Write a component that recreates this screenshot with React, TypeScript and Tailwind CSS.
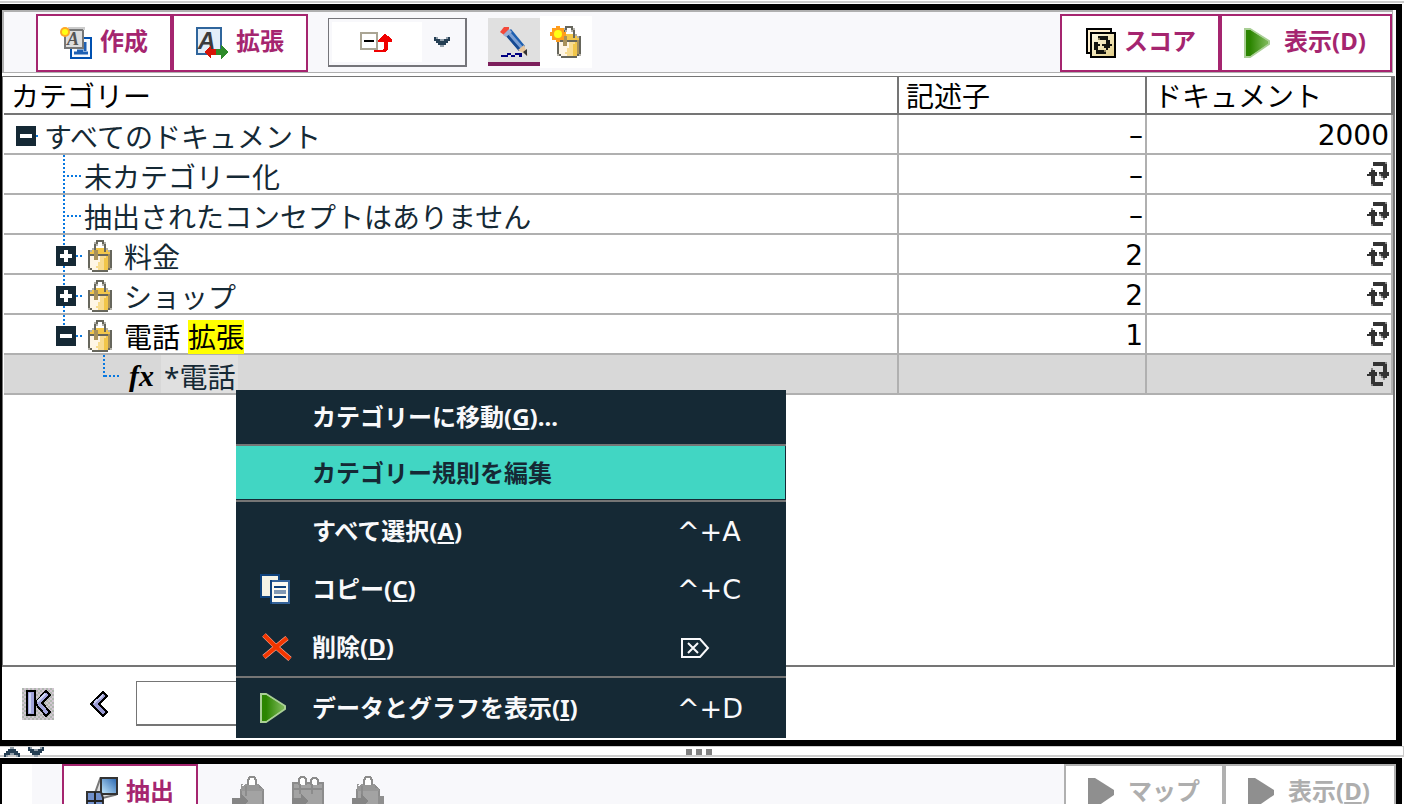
import React from "react";

type IconProps = { className?: string };

function Pixels({ map, colors }: { map: string[]; colors: Record<string, string> }) {
  return (
    <g shapeRendering="crispEdges">
      {map.flatMap((line, y) =>
        line.split("").map((cell, x) =>
          colors[cell] ? <rect key={`${x}-${y}`} x={x * 2} y={y * 2} width="2" height="2" fill={colors[cell]} /> : null,
        ),
      )}
    </g>
  );
}

const refreshMap = [
  "...######s.",
  "...#######.",
  "........##.",
  "..s.....##.",
  "..##....##.",
  ".####.#####",
  "#####.s####",
  "..##...s##.",
  "..##....s..",
  "..##.......",
  "..######...",
  "..s#####...",
];

function RefreshIcon() {
  return (
    <svg width="22" height="24" viewBox="0 0 22 24" role="img" aria-label="更新">
      <Pixels map={refreshMap} colors={{ "#": "#333", s: "#8a8a8a" }} />
    </svg>
  );
}

const bucketMap = [
  "....gggg....",
  "...sg..gs...",
  "...gs..sg...",
  "...g....g...",
  "..sgyyyygs..",
  "gsyddyyygysg",
  "gyyddyyyyyyg",
  "gggddgggggdg",
  "gwwddwcccydg",
  "gwwddwccyydg",
  "gwwwwwccyydg",
  "gwwwwcccyydg",
  "gwwwwcccyydg",
  "gwwwccccyydg",
  "sgwwwcccyygs",
  "..gggggggg..",
];
const bucketColors = { g: "#66665c", s: "#b5b3aa", d: "#a8915a", y: "#f1c64a", c: "#f8dc92", w: "#fff6e6" };

function BucketIcon() {
  return (
    <svg width="24" height="32" viewBox="0 0 24 32" className="block shrink-0" aria-hidden="true">
      <Pixels map={bucketMap} colors={bucketColors} />
    </svg>
  );
}

function NewBucketIcon() {
  return (
    <svg width="32" height="32" viewBox="0 0 32 32" aria-hidden="true">
      <g transform="translate(7 0)">
        <Pixels map={bucketMap} colors={bucketColors} />
      </g>
      <path d="M6 0h4v2h4v4h2v4h-2v4h-4v2H6v-2H2v-4H0V6h2V2h4z" fill="#ff9d1c" shapeRendering="crispEdges" />
      <circle cx="8" cy="8" r="4" fill="#ffff14" />
    </svg>
  );
}

function CreateIcon() {
  return (
    <svg width="32" height="32" viewBox="0 0 32 32" aria-hidden="true">
      <rect x="11" y="11" width="20" height="20" fill="#f4f9ff" stroke="#0050b0" strokeWidth="2" />
      <path d="M14 26h14M25 15v9M17 24h6" stroke="#1d60b4" strokeWidth="3" />
      <rect x="5" y="3" width="18" height="18" fill="#dedede" stroke="#777" strokeWidth="2" />
      <path d="M8 1h16v2" fill="none" stroke="#ccc" strokeWidth="2" />
      <text x="7" y="18" fontSize="18" fontWeight="700" fontStyle="italic" fontFamily="Liberation Serif, serif" fill="#555">A</text>
      <circle cx="5" cy="5" r="5" fill="#ffa826" />
      <circle cx="5" cy="5" r="3" fill="#ffff14" />
    </svg>
  );
}

function ExtendIcon() {
  return (
    <svg width="32" height="32" viewBox="0 0 32 32" aria-hidden="true">
      <rect x="1" y="1" width="24" height="26" fill="#e4eef8" stroke="#2f659c" strokeWidth="2" />
      <text x="2" y="22" fontSize="24" fontWeight="700" fontStyle="italic" fontFamily="Liberation Sans, sans-serif" fill="#3c3c3c">A</text>
      <g shapeRendering="crispEdges">
        <path d="M8 25l7-7v4h6v6h-6v4z" fill="#d61407" />
        <path d="M32 25l-7-7v4h-5v6h5v4z" fill="#2e8b2a" />
      </g>
    </svg>
  );
}

function CollapseIcon() {
  return (
    <svg width="32" height="20" viewBox="0 0 32 20" aria-hidden="true" shapeRendering="crispEdges">
      <rect x="1" y="1" width="16" height="16" fill="#fff" stroke="#aaa594" strokeWidth="2" />
      <path d="M4 8h10v2H4z" fill="#000" />
      <path d="M14 18h8l2-2V10h-6V8l2-2 2-2 3-2 3 2 2 2 2 2v2h-4v7l-3 3H14z" fill="#f00000" />
    </svg>
  );
}

function Chevron({ className }: IconProps) {
  return (
    <svg width="16" height="10" viewBox="0 0 16 10" className={className} aria-hidden="true">
      <Pixels
        map={["#s....s#", "###ss###", ".######.", "..####..", "...ss..."]}
        colors={{ "#": "#253f54", s: "#93a0ab" }}
      />
    </svg>
  );
}

function PencilIcon() {
  return (
    <svg width="32" height="32" viewBox="0 0 32 32" aria-hidden="true">
      <path d="M7 8l6-5 14 17-6 5z" fill="#1d5fb0" />
      <path d="M9 9l13 15" stroke="#174a92" strokeWidth="3" />
      <path d="M11 7l13 15" stroke="#7c9fd2" strokeWidth="3" />
      <path d="M2 6l4-5h5v4L6 9z" fill="#f4493a" />
      <path d="M5 9l6-6 3 3-6 5z" fill="#9bb0d4" />
      <path d="M20 24l6-5 4 11z" fill="#e8c79d" />
      <path d="M25 26l4-3v7z" fill="#333" />
      <path d="M3 30h7M9 28h4M13 30h4M17 28h7M21 30h3" stroke="#000080" strokeWidth="2" fill="none" />
    </svg>
  );
}

function ScoreIcon() {
  return (
    <svg width="30" height="30" viewBox="0 0 30 30" aria-hidden="true">
      <defs>
        <linearGradient id="cream" x2="1" y2="1">
          <stop offset="0" stopColor="#fffbe8" />
          <stop offset="1" stopColor="#e0cc84" />
        </linearGradient>
      </defs>
      <rect x="1" y="1" width="24" height="24" fill="#fff0d0" stroke="#000" strokeWidth="2" />
      <rect x="5" y="5" width="24" height="24" fill="url(#cream)" stroke="#000" strokeWidth="2" />
      <g transform="translate(8 8)">
        <Pixels
          map={["..#####..", "..s####..", "......##.", "##....##.", "###.#####", "##...###.", "##....#..", ".####s...", ".#####..."]}
          colors={{ "#": "#151510", s: "#8a805c" }}
        />
      </g>
    </svg>
  );
}

function PlayIcon() {
  return (
    <svg width="26" height="30" viewBox="0 0 26 30" aria-hidden="true">
      <defs>
        <linearGradient id="leaf">
          <stop offset="0.2" stopColor="#2b8500" />
          <stop offset="1" stopColor="#7cb857" />
        </linearGradient>
      </defs>
      <path d="M1 1h5l19 12v3L6 29H1z" fill="url(#leaf)" stroke="#a9cf95" strokeWidth="2" />
      <path d="M2 2h4l17 11v3L6 28H2z" fill="url(#leaf)" />
    </svg>
  );
}

function GreyPlayIcon() {
  return (
    <svg width="26" height="30" viewBox="0 0 26 30" aria-hidden="true">
      <path d="M0 0h7l19 12v5L7 30H0z" fill="#8f8f8f" />
    </svg>
  );
}

function CopyIcon() {
  return (
    <svg width="30" height="30" viewBox="0 0 30 30" aria-hidden="true">
      <rect x="1" y="1" width="18" height="22" fill="#f5f3e6" stroke="#0f427c" strokeWidth="2" />
      <rect x="11" y="7" width="18" height="22" fill="#fbfaf2" stroke="#34639a" strokeWidth="2" />
      <path d="M11 6v24" stroke="#0f427c" strokeWidth="2" />
      <path d="M14 13h12M14 23h12" stroke="#0f427c" strokeWidth="2" />
      <path d="M14 18h12" stroke="#8199b4" strokeWidth="4" />
    </svg>
  );
}

function DeleteIcon() {
  return (
    <svg width="32" height="28" viewBox="0 0 32 28" aria-hidden="true">
      <path d="M4 2l11 11L30 26M27 5L16 14 4 24" fill="none" stroke="#ffad99" strokeWidth="5" />
      <path d="M4 2l11 11L30 26M27 5L16 14 4 24" fill="none" stroke="#f33600" strokeWidth="4" />
    </svg>
  );
}

function ForwardDeleteIcon() {
  return (
    <svg width="30" height="22" viewBox="0 0 30 22" className="ml-[3px]" role="img" aria-label="Delete">
      <path d="M2 2h18l8 9-8 9H2zM8 6l10 10M18 6L8 16" fill="none" stroke="#f9f9fb" strokeWidth="2" />
    </svg>
  );
}

function FirstIcon() {
  return (
    <svg width="32" height="32" viewBox="0 0 32 32" aria-hidden="true" shapeRendering="crispEdges">
      <defs>
        <pattern id="dither" width="4" height="4" patternUnits="userSpaceOnUse">
          <path d="M0 0h4v4H0z" fill="#d2c6d2" />
          <path d="M0 0h2v2H0zM2 2h2v2H2z" fill="#b0b8b0" />
        </pattern>
      </defs>
      <path d="M0 0h32v32H0z" fill="url(#dither)" />
      <path d="M13 15L24 3l4 4-8 8 8 9-4 4z" fill="#a3a5dc" stroke="#000" strokeWidth="2" />
      <path d="M5 3h8v24H5z" fill="#a3a5dc" stroke="#000" strokeWidth="2" />
      <path d="M8 5v20M15 14l8-8" stroke="#cdd4f2" strokeWidth="2" />
    </svg>
  );
}

function PreviousIcon() {
  return (
    <svg width="18" height="26" viewBox="0 0 18 26" aria-hidden="true" shapeRendering="crispEdges">
      <path d="M1 13L13 1l4 4-8 8 8 8-4 4z" fill="#9999d2" stroke="#000" strokeWidth="2" />
      <path d="M4 12l9-8" stroke="#c4c8ee" strokeWidth="2" />
    </svg>
  );
}

function ExtractIcon() {
  return (
    <svg width="32" height="32" viewBox="0 0 32 32" aria-hidden="true">
      <defs>
        <linearGradient id="screen" x1="1" y1="0" x2="0" y2="1">
          <stop offset="0" stopColor="#2462ad" />
          <stop offset="1" stopColor="#c8ecff" />
        </linearGradient>
      </defs>
      <path d="M14 2L9 16l8 5 12-3z" fill="#ddd" stroke="#777" strokeWidth="2" />
      <rect x="15" y="1" width="16" height="16" fill="url(#screen)" stroke="#333" strokeWidth="2" />
      <path d="M1 15h14l2 6v10H1z" fill="#7190cc" stroke="#333" strokeWidth="2" />
      <path d="M9 15v16M1 24h16" stroke="#222" strokeWidth="2" />
    </svg>
  );
}

function GreyBucketIcon({ kind }: { kind: "single" | "pair" | "link" }) {
  const shift = kind === "link" ? "translate(-4 0)" : undefined;
  return (
    <svg width="32" height="32" viewBox="0 0 32 32" aria-hidden="true" shapeRendering="crispEdges">
      {kind === "pair" ? (
        <>
          <path d="M1 7h30v25H1z" fill="#a3a3a3" stroke="#8c8c8c" strokeWidth="2" />
          <path d="M7 9V3l2-2h3l2 2v6M19 9V4l2-2h3l2 2v5" fill="#fff" stroke="#8c8c8c" strokeWidth="2" />
          <path d="M8 8v10M20 8v10M2 13h28" fill="none" stroke="#8c8c8c" strokeWidth="2" />
        </>
      ) : (
        <g transform={shift}>
          <path d="M9 14l4-4h14l4 4v18H9z" fill="#a3a3a3" stroke="#8c8c8c" strokeWidth="2" />
          <path d="M10 10h3V8h14v4h4v3H9V8h2z" fill="#979797" />
          <path d="M16 9V4l2-3h4l2 3v5" fill="#fff" stroke="#8c8c8c" strokeWidth="2" />
          <path d="M14 10v10" stroke="#8c8c8c" strokeWidth="2" />
        </g>
      )}
      <path d="M0 22h9v-4l8 7-8 7v-4H0z" fill="#858585" />
      {kind === "link" && <path d="M26 20h6v12h-6z" fill="#8f8f8f" />}
    </svg>
  );
}

function ToolButton({ icon, children, className = "" }: { icon: React.ReactNode; children: React.ReactNode; className?: string }) {
  return (
    <button
      type="button"
      className={`flex h-[58px] shrink-0 items-center border-2 border-[#a5256f] bg-white text-2xl font-bold whitespace-nowrap text-[#a5256f] ${className}`}
    >
      {icon}
      <span className="pb-1 leading-9">{children}</span>
    </button>
  );
}

const dotsX = "h-[2px] shrink-0 bg-[repeating-linear-gradient(90deg,#0878e0_0_2px,transparent_2px_4px)]";
const dotsY = "w-[2px] bg-[repeating-linear-gradient(180deg,#0878e0_0_2px,transparent_2px_4px)]";
const label = "pt-[5px] whitespace-nowrap";

function Toggle({ open, lines, last, name }: { open: boolean; lines: boolean; last?: boolean; name: string }) {
  return (
    <span className="flex h-full w-5 shrink-0 flex-col">
      <span className={`ml-[7px] h-[11px] shrink-0 ${lines ? dotsY : ""}`} />
      <button type="button" aria-label={name} aria-expanded={open} className="block size-5 shrink-0 bg-[#152935]">
        <svg width="20" height="20" viewBox="0 0 20 20" aria-hidden="true">
          <path d={open ? "M4 8h12v4H4z" : "M4 8h4V4h4v4h4v4h-4v4H8v-4H4z"} fill="#fff" />
        </svg>
      </button>
      <span className={`ml-[7px] flex-1 ${lines && !last ? dotsY : ""}`} />
    </span>
  );
}

function Leaf({ children }: { children: React.ReactNode }) {
  return (
    <div className="flex h-[38px] items-center pl-[59px]">
      <span className={`h-full shrink-0 ${dotsY}`} />
      <span className={`mt-1 mr-[3px] ml-[2px] w-[14px] ${dotsX}`} />
      <span className={label}>{children}</span>
    </div>
  );
}

function Branch({ open = false, last = false, name, children }: { open?: boolean; last?: boolean; name: string; children: React.ReactNode }) {
  return (
    <div className="flex h-[38px] items-center pl-[52px]">
      <Toggle open={open} lines last={last} name={name} />
      <span className={`mt-1 mr-[6px] w-[6px] ${dotsX}`} />
      <span className="pt-1"><BucketIcon /></span>
      <span className={`pl-3 ${label}`}>{children}</span>
    </div>
  );
}

type Row = { tree: React.ReactNode; count: string; docs: string | null; selected?: boolean };

const rows: Row[] = [
  {
    tree: (
      <div className="flex h-[38px] items-center pl-3">
        <Toggle open lines={false} name="すべてのドキュメント" />
        <span className={`mt-1 mr-1 w-1 ${dotsX}`} />
        <span className={label}>すべてのドキュメント</span>
      </div>
    ),
    count: "–",
    docs: "2000",
  },
  { tree: <Leaf>未カテゴリー化</Leaf>, count: "–", docs: null },
  { tree: <Leaf>抽出されたコンセプトはありません</Leaf>, count: "–", docs: null },
  { tree: <Branch name="料金">料金</Branch>, count: "2", docs: null },
  { tree: <Branch name="ショップ">ショップ</Branch>, count: "2", docs: null },
  {
    tree: (
      <Branch open last name="電話">
        <span className="flex gap-2 text-black">
          電話 <mark className="bg-[#ffff00] text-black">拡張</mark>
        </span>
      </Branch>
    ),
    count: "1",
    docs: null,
  },
  {
    tree: (
      <div className="flex h-[38px] items-center pl-[99px]">
        <span className={`mb-auto h-[22px] shrink-0 ${dotsY}`} />
        <span className={`mt-1 mr-1 w-4 ${dotsX}`} />
        <i className="w-9 pt-1 pl-1 font-['Liberation_Serif',serif] text-[30px] font-bold text-black">fx</i>
        <span className={`h-[38px] bg-[#e0e0e0] px-[3px] ${label}`}>*電話</span>
      </div>
    ),
    count: "",
    docs: null,
    selected: true,
  },
];

function MenuItem({ icon, shortcut, active, className, children }: { icon?: React.ReactNode; shortcut?: React.ReactNode; active?: boolean; className: string; children: React.ReactNode }) {
  return (
    <button
      type="button"
      role="menuitem"
      className={`flex w-full items-center pl-6 text-left text-2xl font-bold whitespace-nowrap ${active ? "bg-[#41d6c3] text-[#152935]" : "text-[#f9f9fb]"} ${className}`}
    >
      <span className="w-[52px] shrink-0">{icon}</span>
      <span className="flex-1 leading-9">{children}</span>
      <span className="w-[109px] shrink-0 pt-[2px] font-['DejaVu_Sans',sans-serif] text-[27px] font-normal">{shortcut}</span>
    </button>
  );
}

function Separator() {
  return <div role="separator" className="h-[2px] bg-[#757575]" />;
}

const Key = ({ children }: { children: string }) => (
  <span className="underline decoration-2 underline-offset-2">{children}</span>
);

export default function App() {
  return (
    <div className="relative flex h-screen flex-col overflow-hidden bg-white font-['Noto_Sans','Noto_Sans_CJK_JP',sans-serif] text-[#152935]">
      <div className="mb-px h-[3px] shrink-0 border-b-2 border-[#ccc]" />

      <section className="mr-[2px] flex min-h-0 flex-1 flex-col border-y-[6px] border-r-[6px] border-l-2 border-black">
        <div className="mr-[3px] flex h-[63px] shrink-0 items-start border-t-2 border-r border-b border-l-2 border-[#b0b0b0] bg-[#f8f8fb] pt-[2px] pl-8">
          <ToolButton icon={<CreateIcon />} className="w-[136px] gap-2 pl-[22px]">作成</ToolButton>
          <ToolButton icon={<ExtendIcon />} className="w-[136px] gap-2 pl-[22px]">拡張</ToolButton>
          <button type="button" aria-label="折りたたみ" aria-haspopup="menu" className="mt-1 ml-5 flex h-[49px] w-[139px] shrink-0 items-center border border-r-2 border-b-2 border-[#75757a] p-[3px]">
            <span className="flex h-full w-[90px] items-center bg-white pl-7"><CollapseIcon /></span>
            <Chevron className="ml-3" />
          </button>
          <button type="button" aria-label="編集" aria-pressed="true" className="mt-1 ml-[21px] flex h-12 w-[52px] shrink-0 items-center justify-center border-b-4 border-[#7c1f5c] bg-[#e0e0e0] pt-1">
            <PencilIcon />
          </button>
          <button type="button" aria-label="新規カテゴリー" className="mt-[2px] flex h-[52px] w-[52px] shrink-0 items-center justify-center bg-white">
            <NewBucketIcon />
          </button>
          <div className="flex-1" />
          <ToolButton icon={<ScoreIcon />} className="w-40 gap-2 pl-6">スコア</ToolButton>
          <ToolButton icon={<PlayIcon />} className="w-[172px] gap-[14px] pl-[22px]">表示(D)</ToolButton>
        </div>

        <div className="mt-[3px] mr-px min-h-0 flex-1 overflow-hidden border-t border-r-2 border-b-2 border-l border-[#757575] pl-px">
          <table className="w-full table-fixed border-separate border-spacing-0 text-[28px] leading-[34px]">
            <colgroup>
              <col />
              <col className="w-[248px]" />
              <col className="w-[246px]" />
            </colgroup>
            <thead>
              <tr className="text-left text-black">
                {["カテゴリー", "記述子", "ドキュメント"].map((title) => (
                  <th key={title} scope="col" className="h-[38px] border-r-2 border-b-2 border-[#757575] p-0 pl-[7px] font-normal">
                    <span className="block pt-[2px]">{title}</span>
                  </th>
                ))}
              </tr>
            </thead>
            <tbody>
              {rows.map((row, i) => (
                <tr key={i} className={row.selected ? "bg-[#d8d8d8]" : ""}>
                  <td className="h-10 border-r-2 border-b-2 border-[#b0b0b0] p-0">{row.tree}</td>
                  <td className="h-10 border-r-2 border-b-2 border-[#b0b0b0] p-0 pt-1 pr-[2px] text-right font-['DejaVu_Sans',sans-serif] text-black">{row.count}</td>
                  <td className="h-10 border-r-2 border-b-2 border-[#b0b0b0] p-0 pr-[2px] font-['DejaVu_Sans',sans-serif] text-black">
                    {row.docs ? <div className="pt-1 text-right">{row.docs}</div> : <div className="flex justify-end"><RefreshIcon /></div>}
                  </td>
                </tr>
              ))}
            </tbody>
          </table>
        </div>

        <div className="flex h-[73px] shrink-0 items-center pl-5">
          <button type="button" aria-label="最初のページ"><FirstIcon /></button>
          <button type="button" aria-label="前のページ" className="ml-9"><PreviousIcon /></button>
          <input aria-label="ページ" className="ml-7 h-[45px] w-[300px] border border-r-2 border-b-2 border-[#757575] bg-white px-2 text-2xl outline-none" />
        </div>
      </section>

      <div className="mb-px flex h-[11px] shrink-0 items-start border-t border-r border-b-2 border-[#ccc] pl-1">
        <button type="button" aria-label="上に折りたたむ"><Chevron className="block h-[10px] rotate-180" /></button>
        <button type="button" aria-label="下に折りたたむ" className="ml-2"><Chevron className="block h-[10px]" /></button>
        <span className="flex flex-1 justify-center gap-1 self-end pr-[50px]">
          <i className="size-[6px] bg-[#808080]" />
          <i className="size-[6px] bg-[#808080]" />
          <i className="size-[6px] bg-[#808080]" />
        </span>
      </div>

      <section className="mr-[2px] flex h-[46px] shrink-0 items-start overflow-hidden border-t-[6px] border-r-[6px] border-l-2 border-black">
        <div className="flex h-[58px] w-full shrink-0 bg-[#f8f8fb]">
          <div className="w-[30px] shrink-0 bg-white" />
          <ToolButton icon={<ExtractIcon />} className="ml-[30px] w-[136px] gap-2 pl-[22px]">抽出</ToolButton>
          <div className="ml-[34px] flex items-start gap-7 pt-3">
            <button type="button" disabled aria-label="カテゴリーに追加"><GreyBucketIcon kind="single" /></button>
            <button type="button" disabled aria-label="複数カテゴリーに追加"><GreyBucketIcon kind="pair" /></button>
            <button type="button" disabled aria-label="リンクを追加"><GreyBucketIcon kind="link" /></button>
          </div>
          <div className="flex-1" />
          <button type="button" disabled className="flex w-40 shrink-0 items-center gap-[14px] border-2 border-[#b0b0b0] bg-white pl-[22px] text-2xl font-bold whitespace-nowrap text-[#aeaeae]">
            <GreyPlayIcon /><span className="pb-1 leading-9">マップ</span>
          </button>
          <button type="button" disabled className="flex w-[172px] shrink-0 items-center gap-[14px] border-2 border-[#b0b0b0] bg-white pl-[22px] text-2xl font-bold whitespace-nowrap text-[#aeaeae]">
            <GreyPlayIcon /><span className="pb-1 leading-9">表示(<Key>D</Key>)</span>
          </button>
        </div>
      </section>

      <div role="menu" className="absolute top-[390px] left-[236px] w-[550px] bg-[#152935]">
        <MenuItem className="h-[54px]">カテゴリーに移動(<Key>G</Key>)...</MenuItem>
        <Separator />
        <div className="pr-px pb-px">
          <MenuItem active className="h-[53px]">カテゴリー規則を編集</MenuItem>
        </div>
        <Separator />
        <MenuItem shortcut="^+A" className="h-[58px]">すべて選択(<Key>A</Key>)</MenuItem>
        <MenuItem icon={<CopyIcon />} shortcut="^+C" className="h-[58px]">コピー(<Key>C</Key>)</MenuItem>
        <MenuItem icon={<DeleteIcon />} shortcut={<ForwardDeleteIcon />} className="h-[58px]">削除(<Key>D</Key>)</MenuItem>
        <Separator />
        <MenuItem icon={<PlayIcon />} shortcut="^+D" className="h-[60px]">データとグラフを表示(<Key>I</Key>)</MenuItem>
      </div>
    </div>
  );
}
